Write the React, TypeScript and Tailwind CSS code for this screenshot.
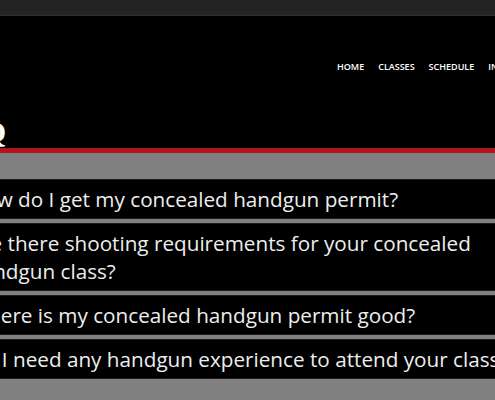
const navItems = ["HOME", "CLASSES", "SCHEDULE", "INFO", "CONTACT"];

const questions = [
  "How do I get my concealed handgun permit?",
  "Are there shooting requirements for your concealed handgun class?",
  "Where is my concealed handgun permit good?",
  "Do I need any handgun experience to attend your class?",
];

const App = () => {
  return (
    <div className="w-[495px] h-[400px] overflow-hidden bg-black" style={{ fontFamily: '"Open Sans", sans-serif' }}>
      <div className="h-[16px] bg-[#232323] border-b border-[#2e2e2e]" />
      <div className="w-[640px] -ml-[31px]">
        <nav className="flex gap-[14px] pl-[368px] pt-[45px] h-[104px]">
          {navItems.map((item) => (
            <span key={item} className="text-[9px] font-semibold text-white leading-[12px]">
              {item}
            </span>
          ))}
        </nav>
        <h1
          className="text-[29px] font-bold text-white leading-[24px] h-[28px]"
          style={{ fontFamily: '"Liberation Serif", serif' }}
        >
          <span className="inline-block -ml-[22px]">FAQ</span>
        </h1>
        <div className="h-[5px] bg-[#b3141b]" />
        <div className="bg-[#808080] pt-[26px] pb-[30px] w-[560px]">
          <div className="flex flex-col gap-[4px]">
            {questions.map((q) => (
              <div key={q} className="bg-black border-y border-[#1c1c1c] py-[5px]">
                <p className="text-[20.7px] leading-[28px] text-[#eeeeee] w-[560px]">{q}</p>
              </div>
            ))}
          </div>
        </div>
      </div>
    </div>
  );
};

export default App;
